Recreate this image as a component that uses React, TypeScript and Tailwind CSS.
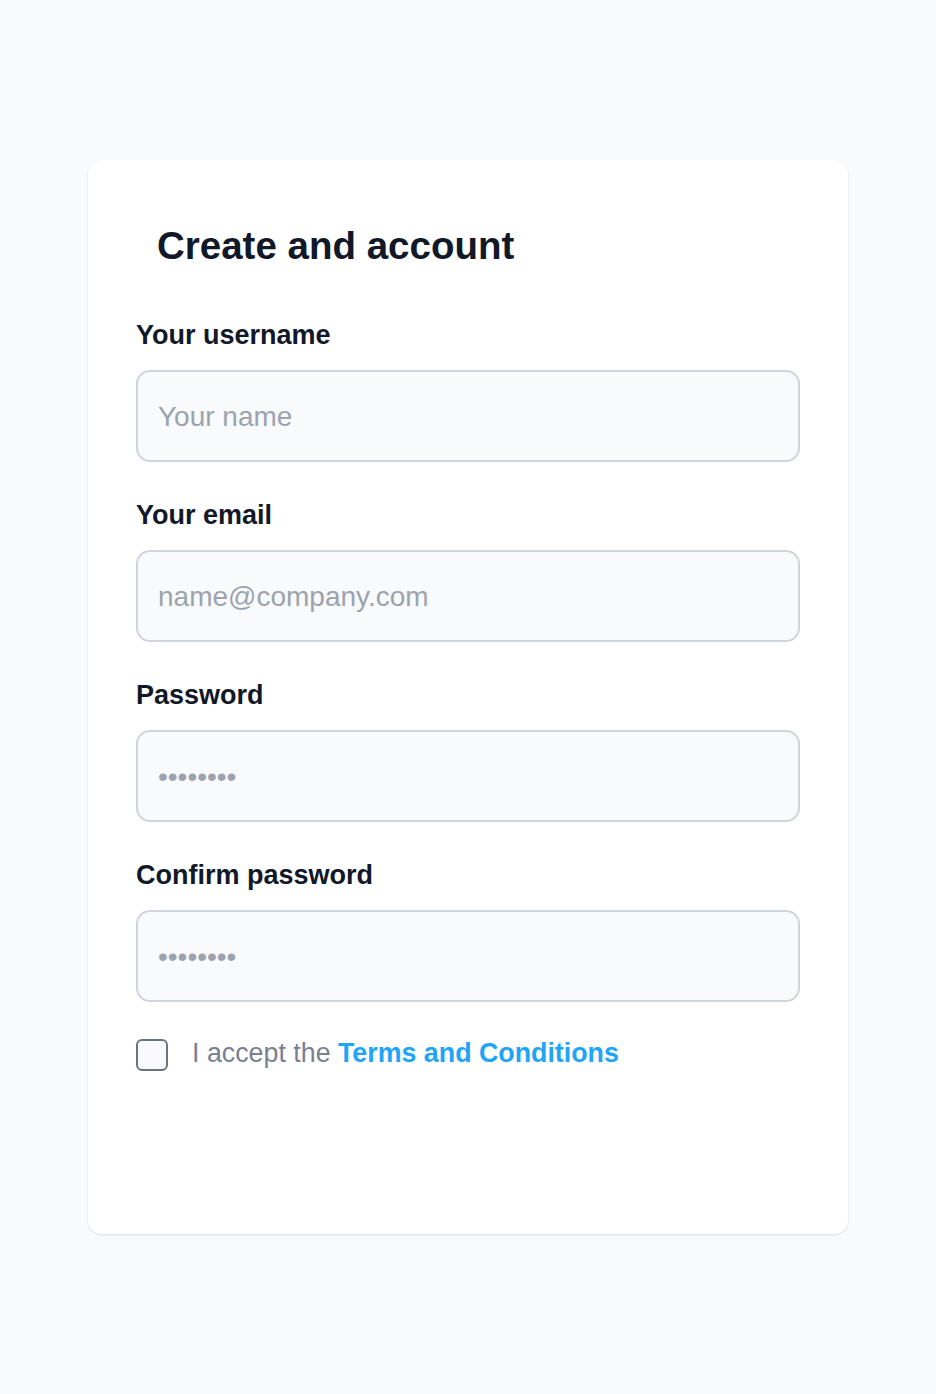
import React from "react";

const font = { fontFamily: '"Liberation Sans", Arial, Helvetica, sans-serif' };

function Field({ label, type, placeholder }: { label: string; type: string; placeholder: string }) {
  return (
    <div className="flex flex-col">
      <label className="block h-[36px] text-[27px] leading-[38px] font-bold text-[#111827]">{label}</label>
      <input
        type={type}
        placeholder={placeholder}
        className="mt-[18px] h-[92px] w-full rounded-[14px] border-2 border-[#d1d5db] bg-[#f9fafb] px-[20px] pt-[2px] text-[28px] text-[#111827] placeholder:text-[#9ca3af] outline-none"
        style={font}
      />
    </div>
  );
}

export default function App() {
  return (
    <div className="min-h-[1394px] w-full bg-[#f9fafb] pt-[160px]" style={font}>
      <div className="mx-[88px] h-[1074px] rounded-[14px] bg-white shadow-[0_1px_3px_rgba(0,0,0,0.08),0_1px_2px_rgba(0,0,0,0.05)] px-[48px] pt-[62px]">
        <h1 className="pl-[21px] h-[48px] text-[38.5px] leading-[48px] font-bold text-[#111827]">Create and account</h1>
        <div className="mt-[46px] flex flex-col gap-[34px]">
          <Field label="Your username" type="text" placeholder="Your name" />
          <Field label="Your email" type="email" placeholder="name@company.com" />
          <Field label="Password" type="password" placeholder="••••••••" />
          <Field label="Confirm password" type="password" placeholder="••••••••" />
        </div>
        <div className="mt-[36px] flex items-center gap-[24px]">
          <div className="h-[32px] w-[32px] rounded-[6px] border-2 border-[#6b7280] bg-[#f9fafb]" />
          <div className="-mt-[3px] text-[26.8px] leading-[36px] text-[#7a8090] font-light">
            I accept the <span className="font-bold text-[#1fa5f7]">Terms and Conditions</span>
          </div>
        </div>
      </div>
    </div>
  );
}
